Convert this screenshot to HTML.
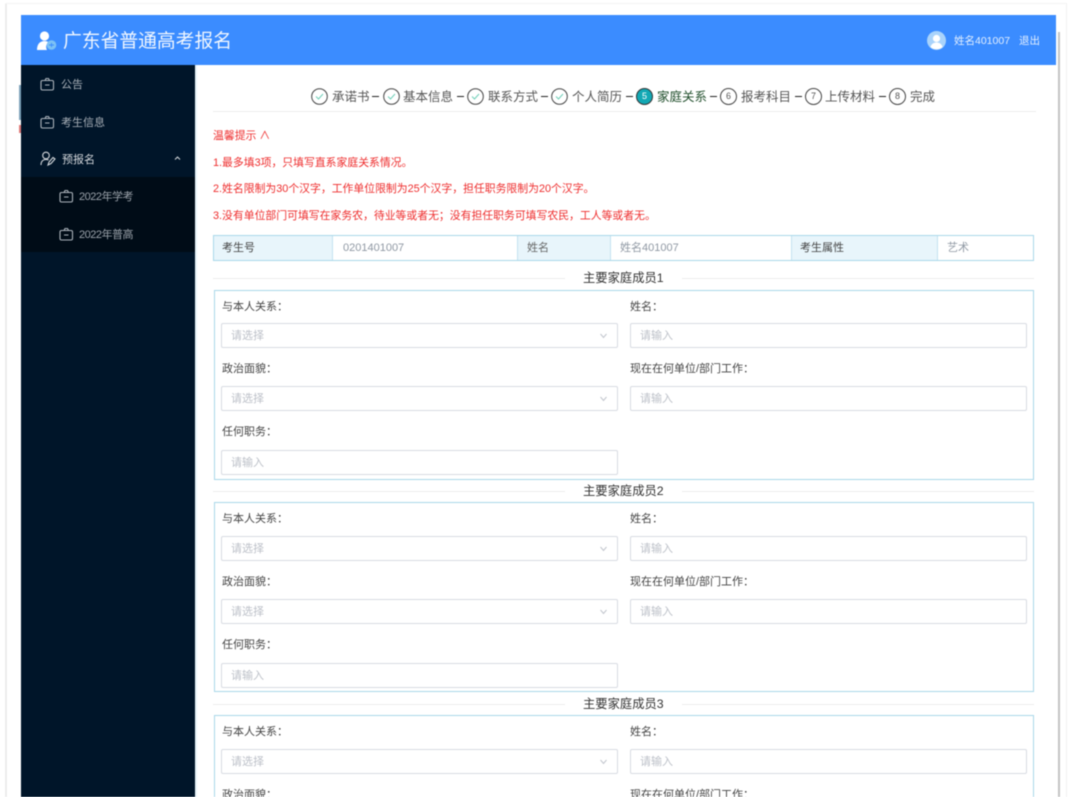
<!DOCTYPE html>
<html lang="zh"><head><meta charset="utf-8"><title>广东省普通高考报名</title>
<style>
*{box-sizing:border-box}
html,body{margin:0;padding:0;width:1080px;height:797px;overflow:hidden;background:#fff}
body{font-family:"Liberation Sans","Noto Sans CJK SC",sans-serif;position:relative}
#w{position:absolute;left:0;top:0;width:1080px;height:797px;overflow:hidden;filter:blur(.5px)}
.a{position:absolute;white-space:nowrap}
.t{position:absolute;white-space:nowrap;line-height:16px}
.m{color:#8f98a3;font-size:11px}
.l{color:#444;font-size:11px}
.r{color:#ee2c2c;font-size:10.85px}
.ip{position:absolute;height:25px;background:#fff;border:1px solid #d8dbe2;border-radius:2px;color:#bcc0c8;font-size:11px;line-height:25px;padding-left:9px;white-space:nowrap}
.box{position:absolute;left:214px;width:820px;height:190px;border:1px solid #a9d8ea}
.hr{position:absolute;height:1px;background:#ececec}
.ti{position:absolute;left:583px;font-size:12.3px;color:#333;line-height:16px;white-space:nowrap}
.st{position:absolute;top:88px;width:17px;height:17px;border:1px solid #444;border-radius:50%;color:#555;font-size:9px;line-height:15px;text-align:center}
.sx{position:absolute;top:89px;font-size:12.5px;color:#555;line-height:16px;white-space:nowrap}
.d{position:absolute;top:96px;width:7px;height:1px;background:#222}
</style></head><body><div id="w">
<div class="a" style="left:5px;top:3px;width:2px;height:794px;background:#ececec"></div>
<div class="a" style="left:5px;top:3px;width:1062px;height:1px;background:#f4f4f4"></div>
<div class="a" style="left:1066px;top:3px;width:1px;height:794px;background:#f2f2f2"></div>
<div class="a" style="left:19px;top:85px;width:2px;height:35px;background:#7fa3bb"></div>
<div class="a" style="left:19px;top:125px;width:2px;height:8px;background:#e07a79"></div>
<div class="a" style="left:1058px;top:32px;width:2px;height:765px;background:#c4c4c4"></div>
<div class="a" style="left:195px;top:65px;width:2px;height:732px;background:#eaf5fa"></div>

<div class="a" style="left:21px;top:15px;width:1035px;height:50px;background:#3b8cff"></div>
<svg class="a" style="left:36px;top:30px" width="22" height="22" viewBox="0 0 22 22"><circle cx="8.500" cy="6" r="4.600" fill="#fff"/><path d="M1 20c0-6 3-9 7.500-9 2 0 3 .5 4 1.200-2.500 2-3 5-1.500 7.800z" fill="#fff"/><circle cx="15.500" cy="15" r="4.800" fill="#7cc2f5"/><path d="M13 15h5M15.500 13v4" stroke="#3b8cff" stroke-width="1"/></svg>
<div class="t" style="left:63px;top:29px;line-height:24px;font-size:18.800px;color:#f1f7ff">广东省普通高考报名</div>
<svg class="a" style="left:927px;top:31px" width="19" height="19" viewBox="0 0 19 19"><circle cx="9.500" cy="9.500" r="9.500" fill="#a9d3fb"/><circle cx="9.500" cy="7.500" r="3.600" fill="#fff"/><path d="M3.500 16c1-3.500 3.500-4.500 6-4.500s5 1 6 4.500c-3 3-9 3-12 0z" fill="#fff"/></svg>
<div class="t" style="left:954px;top:33px;font-size:10.500px;color:#e2efff">姓名401007</div>
<div class="t" style="left:1019px;top:33px;font-size:10.500px;color:#e2efff">退出</div>

<div class="a" style="left:21px;top:65px;width:174px;height:732px;background:#001529"></div>
<div class="a" style="left:21px;top:177px;width:174px;height:75px;background:#000c17"></div>
<svg class="a" style="left:40px;top:77px" width="15" height="15" viewBox="0 0 15 15" fill="none" stroke="#aab2ba" stroke-width="1.100"><rect x="1" y="3.500" width="12.500" height="9.500" rx="1.500"/><path d="M5 3.500 6 1.500h2.500l1 2M5 8h4.500"/></svg>
<div class="t" style="left:61px;top:77px;font-size:11px;color:#a8b0b8">公告</div>
<svg class="a" style="left:40px;top:115px" width="15" height="15" viewBox="0 0 15 15" fill="none" stroke="#aab2ba" stroke-width="1.100"><rect x="1" y="3.500" width="12.500" height="9.500" rx="1.500"/><path d="M5 3.500 6 1.500h2.500l1 2M5 8h4.500"/></svg>
<div class="t" style="left:61px;top:115px;font-size:11px;color:#a8b0b8">考生信息</div>
<svg class="a" style="left:40px;top:151px" width="16" height="15" viewBox="0 0 16 15" fill="none" stroke="#d5d9dd" stroke-width="1.100"><circle cx="6" cy="4.500" r="3.300"/><path d="M1 14c0-3.500 2-5.500 5-5.500 1 0 2 .2 2.500.6M8 14l1-3 4-4.500 2 1.500-4 4.500z"/></svg>
<div class="t" style="left:62px;top:152px;font-size:11px;color:#d5d9dd">预报名</div>
<svg class="a" style="left:174px;top:155px" width="7" height="6" viewBox="0 0 7 6" fill="none" stroke="#d5d9dd" stroke-width="1"><path d="M1 4.500 3.500 2 6 4.500"/></svg>
<svg class="a" style="left:59px;top:189px" width="15" height="15" viewBox="0 0 15 15" fill="none" stroke="#aab2ba" stroke-width="1.100"><rect x="1" y="3.500" width="12.500" height="9.500" rx="1.500"/><path d="M5 3.500 6 1.500h2.500l1 2M5 8h4.500"/></svg>
<div class="t" style="left:79px;top:189px;font-size:11px;color:#9aa2aa;letter-spacing:-.5px">2022年学考</div>
<svg class="a" style="left:59px;top:227px" width="15" height="15" viewBox="0 0 15 15" fill="none" stroke="#aab2ba" stroke-width="1.100"><rect x="1" y="3.500" width="12.500" height="9.500" rx="1.500"/><path d="M5 3.500 6 1.500h2.500l1 2M5 8h4.500"/></svg>
<div class="t" style="left:79px;top:227px;font-size:11px;color:#9aa2aa;letter-spacing:-.5px">2022年普高</div>

<!-- steps -->
<svg class="a" style="left:311px;top:88px" width="17" height="17" viewBox="0 0 17 17" fill="none"><circle cx="8.500" cy="8.500" r="7.800" stroke="#444"/><path d="M5 8.500l2.500 2.500 4.500-5" stroke="#6fcfb8"/></svg>
<div class="sx" style="left:332px">承诺书</div><div class="d" style="left:372px"></div>
<svg class="a" style="left:383px;top:88px" width="17" height="17" viewBox="0 0 17 17" fill="none"><circle cx="8.500" cy="8.500" r="7.800" stroke="#444"/><path d="M5 8.500l2.500 2.500 4.500-5" stroke="#6fcfb8"/></svg>
<div class="sx" style="left:403px">基本信息</div><div class="d" style="left:457px"></div>
<svg class="a" style="left:467px;top:88px" width="17" height="17" viewBox="0 0 17 17" fill="none"><circle cx="8.500" cy="8.500" r="7.800" stroke="#444"/><path d="M5 8.500l2.500 2.500 4.500-5" stroke="#6fcfb8"/></svg>
<div class="sx" style="left:488px">联系方式</div><div class="d" style="left:541px"></div>
<svg class="a" style="left:551px;top:88px" width="17" height="17" viewBox="0 0 17 17" fill="none"><circle cx="8.500" cy="8.500" r="7.800" stroke="#444"/><path d="M5 8.500l2.500 2.500 4.500-5" stroke="#6fcfb8"/></svg>
<div class="sx" style="left:572px">个人简历</div><div class="d" style="left:626px"></div>
<div class="st" style="left:636px;background:#13a8b4;border-color:#333;color:#fff">5</div>
<div class="sx" style="left:657px;color:#1f4d2a">家庭关系</div><div class="d" style="left:710px"></div>
<div class="st" style="left:720px">6</div>
<div class="sx" style="left:741px">报考科目</div><div class="d" style="left:795px"></div>
<div class="st" style="left:805px">7</div>
<div class="sx" style="left:825px">上传材料</div><div class="d" style="left:879px"></div>
<div class="st" style="left:889px">8</div>
<div class="sx" style="left:910px">完成</div>
<div class="hr" style="left:213px;top:111px;width:823px"></div>

<div class="t r" style="left:213px;top:128px">温馨提示 ∧</div>
<div class="t r" style="left:213px;top:155px">1.最多填3项，只填写直系家庭关系情况。</div>
<div class="t r" style="left:213px;top:181px">2.姓名限制为30个汉字，工作单位限制为25个汉字，担任职务限制为20个汉字。</div>
<div class="t r" style="left:213px;top:208px">3.没有单位部门可填写在家务农，待业等或者无；没有担任职务可填写农民，工人等或者无。</div>

<!-- info table -->
<div class="a" style="left:213px;top:235px;width:821px;height:26px;border:1px solid #a9d8ea;background:#fff"></div>
<div class="a" style="left:214px;top:236px;width:119px;height:24px;background:#e8f5fb;border-right:1px solid #c4e3f0"></div>
<div class="a" style="left:517px;top:236px;width:94px;height:24px;background:#e8f5fb;border-left:1px solid #c4e3f0;border-right:1px solid #c4e3f0"></div>
<div class="a" style="left:791px;top:236px;width:147px;height:24px;background:#e8f5fb;border-left:1px solid #c4e3f0;border-right:1px solid #c4e3f0"></div>
<div class="t l" style="left:222px;top:240px">考生号</div>
<div class="t m" style="left:343px;top:240px">0201401007</div>
<div class="t m" style="left:527px;top:240px;color:#666">姓名</div>
<div class="t m" style="left:620px;top:240px">姓名401007</div>
<div class="t l" style="left:800px;top:240px">考生属性</div>
<div class="t m" style="left:947px;top:240px">艺术</div>

<!-- block 1 -->
<div class="hr" style="left:213px;top:278px;width:352px"></div><div class="hr" style="left:682px;top:278px;width:352px"></div>
<div class="ti" style="top:270px">主要家庭成员1</div>
<div class="box" style="top:290px"></div>
<div class="t l" style="left:222px;top:299px">与本人关系：</div>
<div class="ip" style="left:221px;top:323px;width:397px">请选择</div>
<svg class="a" style="left:600px;top:333px" width="7" height="6" viewBox="0 0 7 6" fill="none" stroke="#c0c4cc"><path d="M.5 1l3 3.500 3-3.500"/></svg>
<div class="t l" style="left:630px;top:299px">姓名：</div>
<div class="ip" style="left:630px;top:323px;width:397px">请输入</div>
<div class="t l" style="left:222px;top:361px">政治面貌：</div>
<div class="ip" style="left:221px;top:386px;width:397px">请选择</div>
<svg class="a" style="left:600px;top:396px" width="7" height="6" viewBox="0 0 7 6" fill="none" stroke="#c0c4cc"><path d="M.5 1l3 3.500 3-3.500"/></svg>
<div class="t l" style="left:630px;top:361px">现在在何单位/部门工作：</div>
<div class="ip" style="left:630px;top:386px;width:397px">请输入</div>
<div class="t l" style="left:222px;top:424px">任何职务：</div>
<div class="ip" style="left:221px;top:450px;width:397px">请输入</div>

<!-- block 2 -->
<div class="hr" style="left:213px;top:491px;width:352px"></div><div class="hr" style="left:682px;top:491px;width:352px"></div>
<div class="ti" style="top:483px">主要家庭成员2</div>
<div class="box" style="top:502px"></div>
<div class="t l" style="left:222px;top:511px">与本人关系：</div>
<div class="ip" style="left:221px;top:536px;width:397px">请选择</div>
<svg class="a" style="left:600px;top:546px" width="7" height="6" viewBox="0 0 7 6" fill="none" stroke="#c0c4cc"><path d="M.5 1l3 3.500 3-3.500"/></svg>
<div class="t l" style="left:630px;top:511px">姓名：</div>
<div class="ip" style="left:630px;top:536px;width:397px">请输入</div>
<div class="t l" style="left:222px;top:574px">政治面貌：</div>
<div class="ip" style="left:221px;top:599px;width:397px">请选择</div>
<svg class="a" style="left:600px;top:609px" width="7" height="6" viewBox="0 0 7 6" fill="none" stroke="#c0c4cc"><path d="M.5 1l3 3.500 3-3.500"/></svg>
<div class="t l" style="left:630px;top:574px">现在在何单位/部门工作：</div>
<div class="ip" style="left:630px;top:599px;width:397px">请输入</div>
<div class="t l" style="left:222px;top:637px">任何职务：</div>
<div class="ip" style="left:221px;top:663px;width:397px">请输入</div>

<!-- block 3 -->
<div class="hr" style="left:213px;top:704px;width:352px"></div><div class="hr" style="left:682px;top:704px;width:352px"></div>
<div class="ti" style="top:696px">主要家庭成员3</div>
<div class="box" style="top:715px"></div>
<div class="t l" style="left:222px;top:724px">与本人关系：</div>
<div class="ip" style="left:221px;top:749px;width:397px">请选择</div>
<svg class="a" style="left:600px;top:759px" width="7" height="6" viewBox="0 0 7 6" fill="none" stroke="#c0c4cc"><path d="M.5 1l3 3.500 3-3.500"/></svg>
<div class="t l" style="left:630px;top:724px">姓名：</div>
<div class="ip" style="left:630px;top:749px;width:397px">请输入</div>
<div class="t l" style="left:222px;top:787px">政治面貌：</div>
<div class="t l" style="left:630px;top:787px">现在在何单位/部门工作：</div>
</div></body></html>
